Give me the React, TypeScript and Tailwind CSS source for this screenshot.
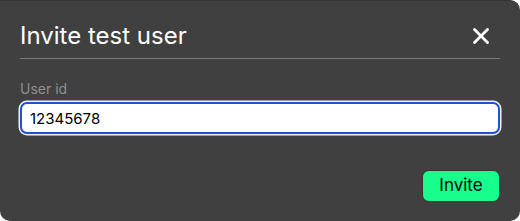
import { X } from 'lucide-react';

export default function App() {
  return (
    <div className="h-[221px] w-[520px] bg-white font-['Inter',sans-serif]">
      <div className="flex h-full flex-col rounded-tr-[10px] rounded-b-[10px] border-t border-[#363636] bg-[#404040] px-5">
        <div className="flex items-center justify-between border-b border-[#7a7a7a] pt-[20px] pb-[8px]">
          <h1 className="text-[24px] leading-[29px] text-white">Invite test user</h1>
          <button className="mr-[6px] text-white">
            <X size={26} strokeWidth={2.6} />
          </button>
        </div>
        <label className="mt-[21px] text-[14px] leading-[17px] text-[#8e8e8e]">User id</label>
        <input
          defaultValue="12345678"
          className="mt-[5px] h-[32px] w-full rounded-[7px] border-2 border-[#1d4fd8] bg-white px-[8px] text-[15px] text-black shadow-[0_0_0_1.5px_#f2f2f2] outline-none"
        />
        <div className="mt-[36px] flex justify-end">
          <button className="h-[32px] w-[78px] rounded-[7px] border border-[#3b2f3b] bg-[#18fd8b] text-[17px] text-black">
            Invite
          </button>
        </div>
      </div>
    </div>
  );
}
